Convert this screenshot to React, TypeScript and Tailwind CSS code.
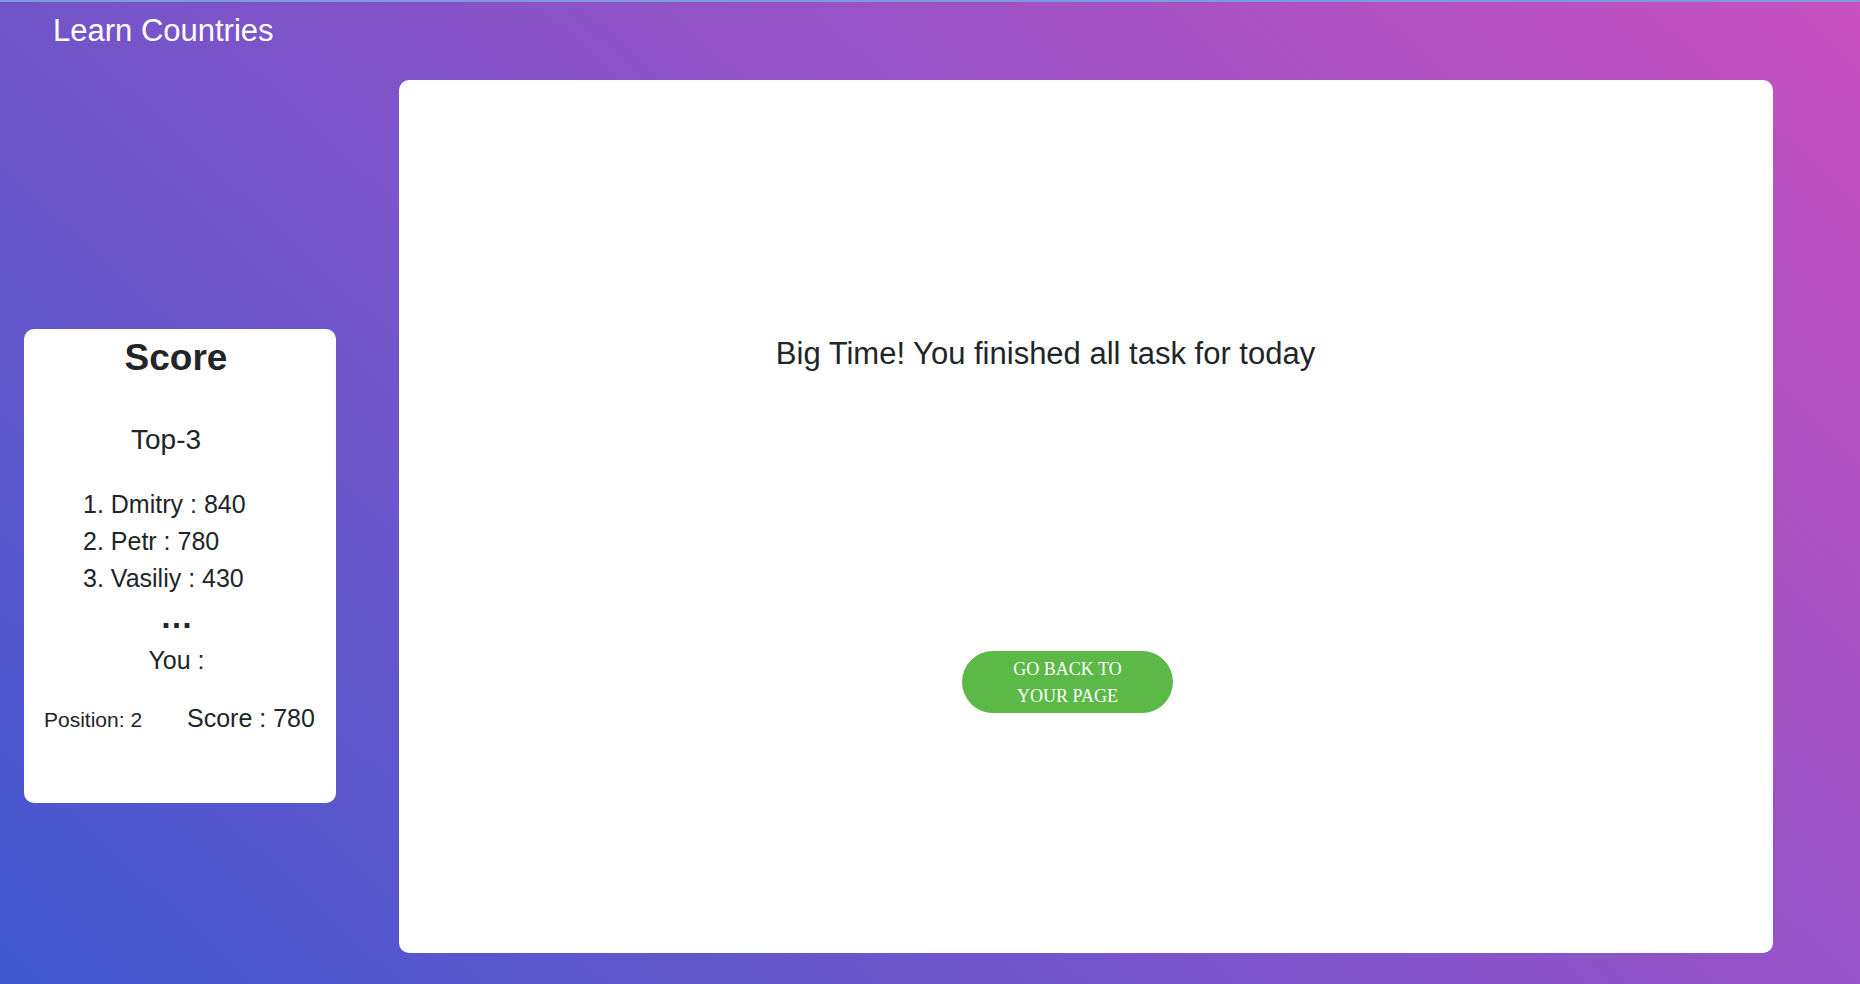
const top3 = [
  { name: 'Dmitry', score: 840 },
  { name: 'Petr', score: 780 },
  { name: 'Vasiliy', score: 430 },
]

function ScoreCard() {
  return (
    <div className="w-[312px] h-[474px] mt-[249px] shrink-0 rounded-[10px] bg-white text-[#212529]">
      <h1 className="pt-[7px] pr-[8px] text-center text-[37px] leading-[44px] font-bold">Score</h1>
      <h3 className="mt-[44px] pl-[107px] text-[28px] leading-[32px]">Top-3</h3>
      <ol className="mt-[30px] pl-[59px] text-[25px] leading-[37px]">
        {top3.map((p, i) => (
          <li key={p.name}>
            {i + 1}. {p.name} : {p.score}
          </li>
        ))}
      </ol>
      <div className="mt-[6px] pr-[7px] text-center text-[33px] leading-[28px] font-bold">…</div>
      <div className="mt-[11px] pr-[7px] text-center text-[25px] leading-[37px]">You :</div>
      <div className="mt-[24px] flex items-baseline">
        <span className="pl-[20px] w-[163px] text-[21px] leading-[30px]">Position: 2</span>
        <span className="text-[25px] leading-[30px]">Score : 780</span>
      </div>
    </div>
  )
}

function FinishedCard() {
  return (
    <div className="w-[1374px] h-[873px] shrink-0 rounded-[10px] bg-white text-[#212529]">
      <p className="pt-[256px] pr-[81px] text-center text-[31px] leading-[36px]">
        Big Time! You finished all task for today
      </p>
      <div className="mt-[279px] pr-[37px] flex justify-center">
        <button className="w-[211px] h-[62px] rounded-full bg-[#5cb947] pt-[1px] text-white text-[18px] leading-[27px] font-['Liberation_Serif',serif]">
          GO BACK TO
          <br />
          YOUR PAGE
        </button>
      </div>
    </div>
  )
}

export default function App() {
  return (
    <div className="w-full min-h-screen border-t-[2px] border-[#7b9bdc] bg-[linear-gradient(43deg,#4158D0,#C850C0)] font-['Liberation_Sans',Arial,sans-serif]">
      <header className="h-[78px] pt-[11px] pl-[53px]">
        <span className="text-white text-[31px] leading-[36px]">Learn Countries</span>
      </header>
      <main className="flex pl-[24px] gap-[63px] pb-[31px]">
        <ScoreCard />
        <FinishedCard />
      </main>
    </div>
  )
}
